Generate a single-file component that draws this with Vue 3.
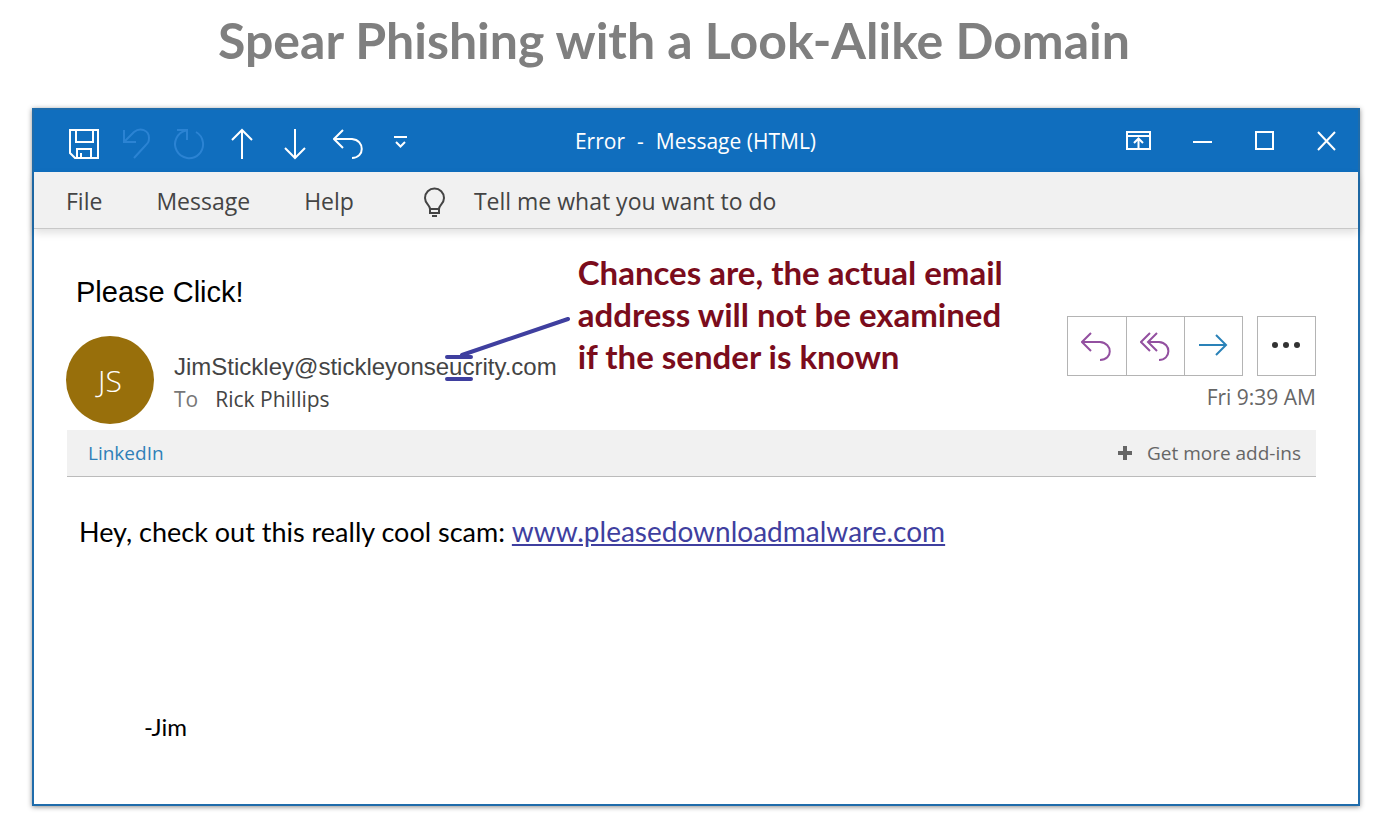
<script setup>
const menus = ['File', 'Message', 'Help']
</script>

<template>
  <div class="page">
    <h1 class="title">Spear Phishing with a Look-Alike Domain</h1>

    <main class="window">
      <header class="titlebar">
        <div class="quick">
          <button type="button" aria-label="Save">
            <svg width="32" height="32" viewBox="0 0 32 32"><path d="M2 2h28v28H7l-5-5zM8 2v12h17V2M9 30V21h14v9M13 25v5" /></svg>
          </button>
          <button type="button" aria-label="Undo" class="dim">
            <svg width="32" height="32" viewBox="0 0 32 32"><path d="M3 2v12h12M3 14L13 4c6-5 15-2 15 6 0 4-1 5-4 8L13 30" /></svg>
          </button>
          <button type="button" aria-label="Redo" class="dim">
            <svg width="32" height="32" viewBox="0 0 32 32"><path d="M3 2h10v10M12 2.500A14 14 0 1 0 22 4" /></svg>
          </button>
          <button type="button" aria-label="Previous item">
            <svg width="32" height="32" viewBox="0 0 32 32"><path d="M15 31V2M5 12L15 2l10 10" /></svg>
          </button>
          <button type="button" aria-label="Next item">
            <svg width="32" height="32" viewBox="0 0 32 32"><path d="M15 1v29M5 20l10 10 10-10" /></svg>
          </button>
          <button type="button" aria-label="Reply">
            <svg width="32" height="32" viewBox="0 0 32 32"><path d="M10 2L1 11l9 9M1 11h18c13 1 13 19 0 19" /></svg>
          </button>
          <button type="button" aria-label="Customize toolbar">
            <svg width="32" height="32" viewBox="0 0 32 32"><path d="M8 9h13M10 14l4.500 4.500 4.500-4.500" /></svg>
          </button>
        </div>
        <div class="caption"><span>Error</span><span>-</span><span>Message (HTML)</span></div>
        <div class="controls">
          <button type="button" aria-label="Ribbon display options">
            <svg width="26" height="20" viewBox="0 0 26 20"><path d="M2 1h23v17H2zM2 5h23M13.500 18V8M9 12l4.500-4.500L18 12" /></svg>
          </button>
          <button type="button" aria-label="Minimize">
            <svg width="20" height="20" viewBox="0 0 20 20"><path d="M0 11h19" /></svg>
          </button>
          <button type="button" aria-label="Maximize">
            <svg width="20" height="20" viewBox="0 0 20 20"><path d="M1 1h17v17H1z" /></svg>
          </button>
          <button type="button" aria-label="Close">
            <svg width="20" height="20" viewBox="0 0 20 20"><path d="M1 1l17 18M18 1L1 19" /></svg>
          </button>
        </div>
      </header>

      <nav class="menubar">
        <button v-for="m in menus" :key="m" type="button">{{ m }}</button>
        <button type="button" class="tell">
          <svg width="24" height="32" viewBox="0 0 24 32"><path d="M7 24c0-4-5-5-5-11a9.500 9.500 0 0 1 19 0c0 6-5 7-5 11zM7 24v4h9v-4M9 31h5" /></svg>
          Tell me what you want to do
        </button>
      </nav>

      <section class="mail">
        <div class="head">
          <div class="left">
            <h2 class="subject">Please Click!</h2>
            <div class="sender">
              <div class="avatar">JS</div>
              <div>
                <div class="email">JimStickley@stickleyonse<span class="swap">uc<svg class="pointer" width="128" height="66" viewBox="0 0 128 66"><path d="M-2 40h24M-2 62h24M13 38L119 2" /></svg></span>rity.com</div>
                <div class="to"><span>To</span>Rick Phillips</div>
              </div>
            </div>
          </div>
          <p class="callout">Chances are, the actual email<br>address will not be examined<br>if the sender is known</p>
          <div class="right">
            <div class="actions">
              <div class="group">
                <button type="button" aria-label="Reply" class="purple">
                  <svg width="32" height="32" viewBox="0 0 32 32"><path d="M10 3L1 12l9 9M1 12h18c13 1 13 18 0 18" /></svg>
                </button>
                <button type="button" aria-label="Reply all" class="purple">
                  <svg width="32" height="32" viewBox="0 0 32 32"><path d="M10 3L1 12l9 9M17 3L8 12l9 9M8 12h11c13 1 12 18 0 18" /></svg>
                </button>
                <button type="button" aria-label="Forward" class="forward">
                  <svg width="32" height="32" viewBox="0 0 32 32"><path d="M1 15h27M18 5l10 10-10 10" /></svg>
                </button>
              </div>
              <button type="button" aria-label="More actions" class="more">
                <svg width="32" height="32" viewBox="0 0 32 32"><circle cx="4" cy="15" r="3" /><circle cx="15" cy="15" r="3" /><circle cx="26" cy="15" r="3" /></svg>
              </button>
            </div>
            <time class="date">Fri 9:39 AM</time>
          </div>
        </div>

        <div class="addins">
          <a href="#">LinkedIn</a>
          <button type="button">
            <svg width="16" height="16" viewBox="0 0 16 16"><path d="M8 1v14M1 8h14" /></svg>
            Get more add-ins
          </button>
        </div>

        <article class="body">
          <p>Hey, check out this really cool scam: <a href="#">www.pleasedownloadmalware.com</a></p>
          <p class="sign">-Jim</p>
        </article>
      </section>
    </main>
  </div>
</template>

<style>
body {
  margin: 0;
  background: #fff;
}
</style>

<style scoped>
.page {
  box-sizing: border-box;
  min-height: 100vh;
  display: flex;
  flex-direction: column;
  padding: 0 40px 24px 32px;
  font-family: "Open Sans", "Noto Sans", sans-serif;
  color: #444;
}
.title {
  margin: 0;
  padding: 6px 44px 34px 0;
  text-align: center;
  font: 700 50px/68px Lato, sans-serif;
  color: #7f7f7f;
}
button {
  display: flex;
  align-items: center;
  padding: 0;
  border: 0;
  background: none;
  font: inherit;
  color: inherit;
  cursor: pointer;
}
svg {
  fill: none;
  stroke: currentColor;
  stroke-width: 2;
  flex: none;
}
.window {
  flex: 1;
  display: flex;
  flex-direction: column;
  border: 2px solid #1f6cab;
  box-shadow: 0 1px 5px rgba(0, 0, 0, 0.45);
}
.titlebar {
  display: grid;
  grid-template-columns: 1fr auto 1fr;
  align-items: center;
  height: 62px;
  padding: 0 21px 0 34px;
  background: #106ebe;
  color: #fff;
}
.quick {
  display: flex;
  gap: 21px;
  padding-top: 6px;
}
.dim {
  color: #2b83d3;
}
.caption {
  display: flex;
  gap: 12px;
  padding-right: 14px;
  font-size: 21px;
}
.controls {
  display: flex;
  justify-content: flex-end;
  gap: 42px;
}
.menubar {
  display: flex;
  align-items: center;
  height: 55px;
  padding: 1px 32px 0;
  gap: 54px;
  background: #f1f1f1;
  border-bottom: 1px solid #c8c8c8;
  box-shadow: 0 4px 8px rgba(0, 0, 0, 0.12);
  font-size: 23px;
}
.tell {
  gap: 27px;
  margin-left: 15px;
}
.mail {
  padding: 23px 42px 40px 33px;
}
.head {
  display: flex;
  height: 178px;
}
.left {
  margin-left: -1px;
}
.subject {
  margin: 0;
  padding: 20px 0 24px 10px;
  font: 400 29px/40px "Liberation Sans", Arial, sans-serif;
  color: #000;
}
.sender {
  display: flex;
  gap: 20px;
}
.avatar {
  display: flex;
  align-items: center;
  justify-content: center;
  width: 88px;
  height: 88px;
  border-radius: 50%;
  background: #986f0b;
  color: #fff;
  font-size: 30px;
  font-weight: 300;
}
.email {
  padding-top: 15px;
  font: 24px/32px "Liberation Sans", Arial, sans-serif;
}
.swap {
  position: relative;
}
.pointer {
  position: absolute;
  left: 0;
  top: -36px;
  overflow: visible;
  color: #3f3f9f;
  stroke-width: 4;
  stroke-linecap: round;
}
.to {
  font-size: 21px;
  line-height: 32px;
}
.to span {
  margin-right: 17px;
  color: #777;
}
.callout {
  margin: -1px 0 0 21px;
  font: 700 33px/42px Lato, sans-serif;
  color: #7b0c1c;
  white-space: nowrap;
}
.right {
  margin-left: auto;
  padding-top: 64px;
  text-align: right;
}
.actions {
  display: flex;
  justify-content: flex-end;
  gap: 14px;
}
.group {
  display: flex;
  border: 1px solid #b4b4b4;
}
.actions button {
  justify-content: center;
  width: 58px;
  height: 58px;
}
.group button + button {
  border-left: 1px solid #b4b4b4;
}
.actions .more {
  width: 59px;
  height: 60px;
  border: 1px solid #b4b4b4;
}
.purple {
  color: #9350a0;
}
.forward {
  color: #2a82b8;
}
.more svg {
  fill: #333;
  stroke: none;
}
.date {
  display: block;
  font-size: 21px;
  line-height: 42px;
  color: #666;
}
.addins {
  display: flex;
  align-items: center;
  justify-content: space-between;
  height: 46px;
  padding: 0 15px 0 21px;
  background: #f1f1f1;
  border-bottom: 1px solid #bbb;
  font-size: 19px;
  color: #666;
}
.addins a {
  color: #2f80b8;
  text-decoration: none;
}
.addins button {
  gap: 14px;
}
.addins svg {
  stroke-width: 4;
}
.body {
  padding: 35px 12px 0;
  font: 27px/38px Lato, sans-serif;
  color: #000;
}
.body p {
  margin: 0;
}
.body a {
  font-size: 28px;
  color: #3f3f9f;
}
.body .sign {
  padding: 157px 0 0 65px;
  font-size: 24px;
}
</style>
